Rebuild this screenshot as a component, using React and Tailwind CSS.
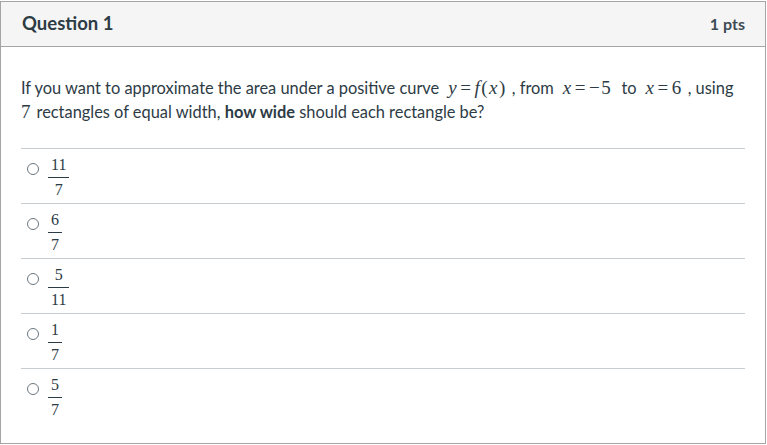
const answers = [
  ['11', '7'],
  ['6', '7'],
  ['5', '11'],
  ['1', '7'],
  ['5', '7'],
];

const serif = { fontFamily: '"Liberation Serif", serif' };

function M({ children }) {
  return (
    <span className="ml-[9px] mr-[5px] text-[19px] italic tracking-[1.5px]" style={serif}>
      {children}
    </span>
  );
}

function Eq() {
  return <span className="not-italic mx-[2px]">=</span>;
}

function N({ children }) {
  return <span className="not-italic">{children}</span>;
}

function Frac({ top, bottom }) {
  return (
    <span className="inline-flex flex-col items-center text-[16px] leading-none text-[#2d3b45]" style={serif}>
      <span className="px-[3px] pb-[4px]">{top}</span>
      <span className="w-full border-t border-[#2d3b45] pt-[4px] px-[3px] text-center">{bottom}</span>
    </span>
  );
}

export default function App() {
  return (
    <div className="w-[767px] h-[445px] bg-white pt-px" style={{ fontFamily: 'Lato, "Open Sans", sans-serif' }}>
      <div className="w-[766px] h-[443px] border border-[#a5a5a5] flex flex-col text-[#2d3b45]">
        {/* header */}
        <div className="h-[45px] shrink-0 bg-[#f5f5f5] border-b border-[#a5a5a5] flex items-center justify-between pl-[21px] pr-[20px]">
          <h2 className="text-[18.5px] font-bold">Question 1</h2>
          <span className="text-[16px] font-bold text-[#3d4b55]">1 pts</span>
        </div>

        {/* body */}
        <div className="px-[20px] pt-[29px]">
          <p className="text-[16.4px] leading-[24px]">
            If you want to approximate the area under a positive curve
            <M>y<Eq />f<N>(</N>x<N>)</N></M>, from
            <M>x<Eq /><N>−5</N></M> to
            <M>x<Eq /><N>6</N></M>, using
            <br />
            <span className="text-[19px] mr-[6px]" style={serif}>7</span>
            rectangles of equal width, <b>how wide</b> should each rectangle be?
          </p>

          <div className="mt-[24px]">
            {answers.map(([t, b], i) => (
              <div key={i} className="h-[55px] border-t border-[#c7cdd1] flex items-start pt-[8px] pl-[6px]">
                <span className="mt-[6px] w-[12px] h-[12px] rounded-full border border-[#6b7780] mr-[9px]" />
                <Frac top={t} bottom={b} />
              </div>
            ))}
          </div>
        </div>
      </div>
    </div>
  );
}
